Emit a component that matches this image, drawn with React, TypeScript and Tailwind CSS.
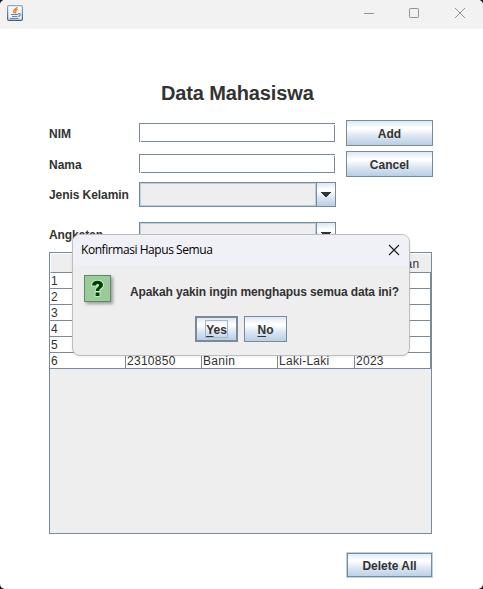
import type { ReactNode } from "react";

const buttonFill =
  "bg-[linear-gradient(to_bottom,#dde8f3_0%,#ffffff_30%,#ffffff_34%,#dde8f3_60%,#b8cfe5_100%)]";

function SwingButton({ children, className = "" }: { children: ReactNode; className?: string }) {
  return (
    <button
      className={`flex h-[26px] w-[87px] shrink-0 items-center justify-center border border-[#7a8a99] pt-[2px] text-[12px] font-bold leading-[14px] ${buttonFill} ${className}`}
    >
      {children}
    </button>
  );
}

function TextField() {
  return (
    <div className="relative h-[19px] w-[196px] border border-[#7a8a99] bg-white">
      <i className="absolute -bottom-px -left-px h-px w-[2px] bg-white" />
      <i className="absolute -bottom-px -left-px h-px w-px bg-[#7a8a99]" />
      <i className="absolute -right-px top-0 h-px w-px bg-white" />
    </div>
  );
}

function ComboBox() {
  return (
    <div className="flex h-[25px] w-[197px] border border-[#7a8a99]">
      <div className="flex-1 border border-[#b8cfe5] bg-[#eeeeee]" />
      <div className={`flex w-[19px] items-center justify-center border-l border-[#7a8a99] ${buttonFill}`}>
        <svg width="10" height="5" viewBox="0 0 10 5" shapeRendering="crispEdges">
          <path d="M0 0H10V1H9V2H8V3H7V4H6V5H4V4H3V3H2V2H1V1H0Z" fill="#333333" />
        </svg>
      </div>
    </div>
  );
}

function JavaIcon() {
  return (
    <svg width="16" height="16" viewBox="0 0 16 16">
      <defs>
        <linearGradient id="frame" x1="0" y1="0" x2="0" y2="1">
          <stop offset="0" stopColor="#8caabd" />
          <stop offset="1" stopColor="#3e6077" />
        </linearGradient>
        <linearGradient id="face" x1="0" y1="0" x2="0" y2="1">
          <stop offset="0" stopColor="#ffffff" />
          <stop offset="1" stopColor="#e3e7eb" />
        </linearGradient>
      </defs>
      <rect x=".6" y=".6" width="14.8" height="14.8" rx="1.3" fill="url(#face)" stroke="url(#frame)" strokeWidth="1.2" />
      <path d="M10 2.2C9.6 4 6.2 4.5 6.6 6.3C6.8 7.2 7.3 7.6 7.5 8.3M10.7 4.3C9 5 8 5.8 8.7 6.7C9 7.3 8.7 7.9 8.2 8.3" fill="none" stroke="#ec8024" strokeWidth="1.4" />
      <path d="M4 9.5H11M5 11.5H10M3 13.5H11.5M11 8.6C14 7.8 14 11.2 10.7 11.5" fill="none" stroke="#5f86a5" strokeWidth="1.1" />
    </svg>
  );
}

function QuestionIcon() {
  return (
    <div className="flex h-[27px] w-[27px] items-center justify-center border border-[#5f8a65] bg-[#99cc99] shadow-[2px_2px_3px_rgba(0,0,0,0.35)]">
      <svg width="15" height="19" viewBox="0 0 15 19">
        <path d="M2 6.6C2 3.4 4.1 1.8 7.5 1.8C10.9 1.8 13 3.4 13 6C13 9 9.3 9.2 9.3 12H5.7C5.7 8.7 9 8.2 9 6.2C9 4.4 6 4.4 6 6.6ZM5.6 13.6H9.5V16.9H5.6Z" fill="#004000" stroke="#ccf0cc" strokeWidth="1.8" paintOrder="stroke" />
      </svg>
    </div>
  );
}

const rows = [
  ["1", "", "", "", ""],
  ["2", "", "", "", ""],
  ["3", "", "", "", ""],
  ["4", "", "", "", ""],
  ["5", "", "", "", ""],
  ["6", "2310850", "Banin", "Laki-Laki", "2023"],
];

function DataTable() {
  return (
    <div className="h-[282px] w-[383px] border border-[#7a8a99] bg-[#eeeeee] text-[12px] leading-[16px] tracking-[0.28px]">
      <div className="grid h-5 grid-cols-[76px_76px_76px_77px_76px] border-b border-l border-t border-b-[#7a8a99] border-l-white border-t-white">
        {["", "", "", "", "Angkatan"].map((name, i) => (
          <div
            key={i}
            className={`flex items-center justify-center pt-[2px] ${i === 4 ? "-ml-px border-r border-[#7a8a99]" : "border-r border-[#7a8a99]"}`}
          >
            {name}
          </div>
        ))}
      </div>
      {rows.map((row) => (
        <div key={row[0]} className="grid h-4 grid-cols-[76px_76px_76px_77px_76px] bg-white">
          {row.map((cell, i) => (
            <div key={i} className="h-4 border-b border-r border-[#7a8a99] pl-px">
              <span className="relative top-px block h-[14px] leading-[15px]">{cell}</span>
            </div>
          ))}
        </div>
      ))}
    </div>
  );
}

function ConfirmDialog() {
  return (
    <section className="absolute left-[72px] top-[234px] h-[122px] w-[338px] overflow-hidden rounded-[8px] border border-[#bdbdbf] bg-[#eeeeee] shadow-[0_1px_3px_rgba(0,0,0,0.08)]">
      <header className="flex h-[30px] items-center justify-between bg-[#f0f1f7] pl-2 pr-[9px]">
        <span className="whitespace-nowrap font-['Open_Sans',sans-serif] text-[12px] leading-[16px] tracking-[-0.44px] text-black">
          Konfirmasi Hapus Semua
        </span>
        <svg width="12" height="12" viewBox="0 0 12 12" className="-mt-px">
          <path d="M1 1L11 11M11 1L1 11" stroke="#1a1a1a" strokeWidth="1.1" />
        </svg>
      </header>
      <div className="flex pl-[11px] pt-[10px]">
        <QuestionIcon />
        <p className="ml-[19px] mt-[10px] whitespace-nowrap text-[12px] font-bold leading-[14px] tracking-[-0.115px]">
          Apakah yakin ingin menghapus semua data ini?
        </p>
      </div>
      <div className="mt-[14px] flex justify-center gap-[6px]">
        <SwingButton className="w-[43px]! border-2! pt-0!">
          <span className="h-[18px] border border-[#a3b8cc] pt-[2px]">
            <u className="underline-offset-2">Y</u>es
          </span>
        </SwingButton>
        <SwingButton className="w-[43px]!">
          <span>
            <u className="underline-offset-2">N</u>o
          </span>
        </SwingButton>
      </div>
    </section>
  );
}

function Field({ label, children, className = "" }: { label: string; children: ReactNode; className?: string }) {
  return (
    <div className="flex items-center">
      <label className={`w-[90px] whitespace-nowrap text-[12px] font-bold leading-[14px] ${className}`}>{label}</label>
      {children}
    </div>
  );
}

export default function App() {
  return (
    <div className="h-[589px] w-[483px] bg-[#17171a]">
      <main className="relative h-full overflow-hidden rounded-[5px] bg-white font-['Liberation_Sans',Arial,sans-serif] text-[#333333]">
        <header className="flex h-[29px] items-start justify-between bg-[#f2f2f2] pl-[7px] pr-[18px] pt-[5px]">
          <JavaIcon />
          <svg width="101" height="10" viewBox="0 0 101 10" className="mt-[3px]" fill="none" stroke="#939393">
            <path d="M0 5.5H10" />
            <rect x="45.5" y=".5" width="9" height="9" rx=".7" />
            <path d="M91 0L101 10M101 0L91 10" />
          </svg>
        </header>
        <div className="pl-[49px]">
          <h1 className="ml-[112px] mt-[52px] h-[24px] whitespace-nowrap text-[20px] font-bold leading-[24px] tracking-[-0.13px]">
            Data Mahasiswa
          </h1>
          <div className="mt-[15px] flex gap-[11px]">
            <div className="pt-[3px]">
              <Field label="NIM" className="pt-[2px]"><TextField /></Field>
            </div>
            <SwingButton>Add</SwingButton>
          </div>
          <div className="mt-[5px] flex gap-[11px]">
            <div className="pt-[3px]">
              <Field label="Nama" className="pt-[2px]"><TextField /></Field>
            </div>
            <SwingButton>Cancel</SwingButton>
          </div>
          <div className="mt-[5px]">
            <Field label="Jenis Kelamin" className="tracking-[-0.07px]"><ComboBox /></Field>
          </div>
          <div className="mb-[5px] mt-[15px]">
            <Field label="Angkatan" className="tracking-[-0.07px]"><ComboBox /></Field>
          </div>
          <DataTable />
          <SwingButton className="ml-[297px] mt-[18px] border-[#b8cfe5]! shadow-[inset_0_0_0_1px_#7a8a99]">
            Delete All
          </SwingButton>
        </div>
        <ConfirmDialog />
      </main>
    </div>
  );
}
